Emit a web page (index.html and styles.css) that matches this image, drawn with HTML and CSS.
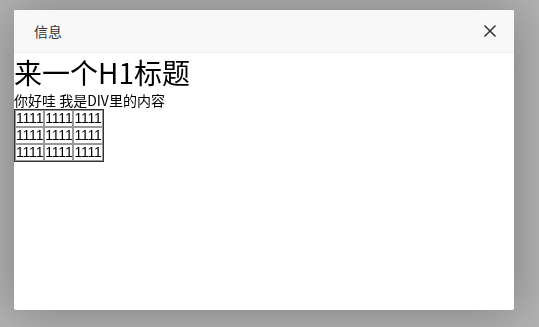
FILE: index.html
```html
<!DOCTYPE html>
<html lang="zh-CN">
<head>
    <meta charset="UTF-8">
    <title>信息</title>
    <link rel="stylesheet" href="styles.css">
</head>
<body>
    <div class="shade"></div>

    <!-- 弹出层 -->
    <div class="layer">
        <div class="layer-title">
            信息
            <a href="#" class="layer-close" title="关闭">
                <svg width="14" height="14" viewBox="0 0 14 14">
                    <path d="M1.5 1.5 L12.5 12.5 M12.5 1.5 L1.5 12.5" stroke="#2f3236" stroke-width="1.5" fill="none"/>
                </svg>
            </a>
        </div>
        <div class="layer-content">
            <h1>来一个H1标题</h1>
            <div class="intro">你好哇 我是DIV里的内容</div>
            <table class="demo-table">
                <tr><td>1111</td><td>1111</td><td>1111</td></tr>
                <tr><td>1111</td><td>1111</td><td>1111</td></tr>
                <tr><td>1111</td><td>1111</td><td>1111</td></tr>
            </table>
        </div>
    </div>
</body>
</html>
```

FILE: styles.css
```css
body, html {
    margin: 0;
    padding: 0;
    height: 100%;
    font-family: 'Noto Sans CJK SC', 'Liberation Sans', sans-serif;
    font-size: 14px;
    color: #000;
    background-color: #fff;
}

.shade {
    position: fixed;
    inset: 0;
    background-color: #000;
    opacity: 0.3;
}

.layer {
    position: absolute;
    left: 14px;
    top: 10px;
    width: 500px;
    height: 300px;
    background-color: #fff;
    border-radius: 2px;
    box-shadow: 1px 1px 50px rgba(0,0,0,0.3);
}

.layer-title {
    position: relative;
    height: 42px;
    line-height: 42px;
    padding: 0 80px 0 20px;
    border-bottom: 1px solid #eee;
    background-color: #f8f8f8;
    border-radius: 2px 2px 0 0;
    font-size: 14px;
    color: #333;
}

.layer-close {
    position: absolute;
    right: 17px;
    top: 14px;
    width: 14px;
    height: 14px;
    display: block;
}

.layer-close svg {
    display: block;
}

.layer-content h1 {
    margin: 0;
    font-size: 28px;
    font-weight: 400;
    line-height: 38px;
}

.intro {
    line-height: 18px;
}

.demo-table {
    border: 1px solid #333;
    border-spacing: 0;
    font-family: 'Liberation Sans', sans-serif;
    font-size: 14px;
    letter-spacing: -0.2px;
}

.demo-table td {
    border: 1px solid #999;
    padding: 0;
    line-height: 15px;
}
```
